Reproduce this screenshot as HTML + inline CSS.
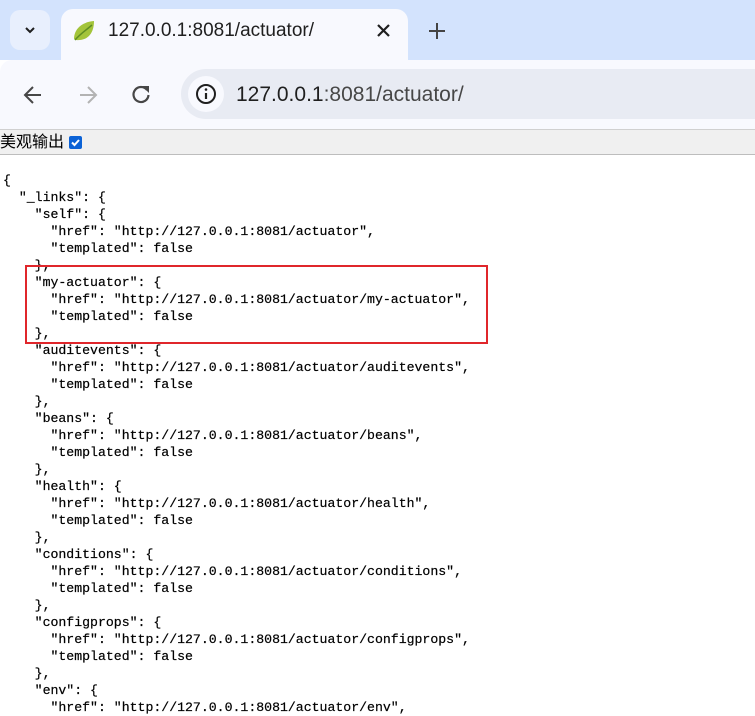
<!DOCTYPE html>
<html><head><meta charset="utf-8"><style>
body{margin:0;width:755px;height:715px;overflow:hidden;background:#fff;font-family:"Liberation Sans","Noto Sans CJK SC",sans-serif;position:relative}
.strip{position:absolute;left:0;top:0;width:755px;height:60px;background:#d3e3fd}
.tabbtn{position:absolute;left:10px;top:10px;width:40px;height:40px;border-radius:10px;background:#e8effd}
.tab{position:absolute;left:61px;top:9px;width:347px;height:52px;background:#f8f9fe;border-radius:12px 12px 0 0}
.tabtxt{position:absolute;left:108px;top:20px;font-size:19px;color:#1f1f1f}
.tool{position:absolute;left:0;top:60px;width:755px;height:69px;background:#f8f9fe;border-radius:12px 0 0 0;border-bottom:1px solid #d0d0d0}
.omni{position:absolute;left:181px;top:69px;width:600px;height:50px;border-radius:25px;background:#e8ebf3}
.info{position:absolute;left:188px;top:76px;width:36px;height:36px;border-radius:18px;background:#f8f9fe}
.url{position:absolute;left:236px;top:83px;font-size:21px;color:#1f1f1f}
.bar{position:absolute;left:0;top:130px;width:755px;height:24px;background:#f0f0f0;border-bottom:1px solid #bdbdbd;font-size:16px;line-height:26px}
.cb{position:absolute;left:69px;top:136px;width:13px;height:13px;background:#0b62d6;border-radius:2px}
pre{position:absolute;left:3px;top:172px;margin:0;font-family:"Liberation Mono",monospace;font-size:13.2px;line-height:17px;color:#000;-webkit-text-stroke:0.2px #000}
.box{position:absolute;left:25px;top:265px;width:459px;height:75px;border:2px solid #e0262b}
</style></head><body>
<div class="strip"></div>
<div class="tabbtn"></div>
<svg style="position:absolute;left:22px;top:22px" width="16" height="16"><path d="M4 6l4 4 4-4" fill="none" stroke="#1f1f1f" stroke-width="2"/></svg>
<div class="tab"></div>
<svg style="position:absolute;left:72px;top:19px" width="24" height="24"><path d="M2 20C2 10 10 3 22 2C22 14 16 22 4 21Z" fill="#a3c43a"/><path d="M3 21C8 15 13 12 20 6" stroke="#5e8d21" stroke-width="1.5" fill="none"/></svg>
<div class="tabtxt">127.0.0.1:8081/actuator/</div>
<svg style="position:absolute;left:376px;top:23px" width="16" height="16"><path d="M2 2l11 11M13 2L2 13" stroke="#1f1f1f" stroke-width="2.2"/></svg>
<svg style="position:absolute;left:428px;top:22px" width="18" height="18"><path d="M9 1v16M1 9h16" stroke="#444" stroke-width="2"/></svg>
<div class="tool"></div>
<svg style="position:absolute;left:22px;top:84px" width="22" height="22"><path d="M19 11H4M11 3L3 11l8 8" fill="none" stroke="#474747" stroke-width="2"/></svg>
<svg style="position:absolute;left:77px;top:84px" width="22" height="22"><path d="M3 11h15M11 3l8 8-8 8" fill="none" stroke="#b3b3b3" stroke-width="2"/></svg>
<svg style="position:absolute;left:130px;top:83px" width="22" height="22"><path d="M17 7A7.5 7.5 0 1 0 18.5 12" fill="none" stroke="#474747" stroke-width="2.2"/><path d="M12 3h7v7z" fill="#474747"/></svg>
<div class="omni"></div>
<div class="info"></div>
<svg style="position:absolute;left:195px;top:83px" width="22" height="22"><circle cx="11" cy="11" r="9" fill="none" stroke="#1f1f1f" stroke-width="2"/><path d="M11 10v6" stroke="#1f1f1f" stroke-width="2.2"/><circle cx="11" cy="6.5" r="1.3" fill="#1f1f1f"/></svg>
<div class="url">127.0.0.1<span style="color:#474747">:8081/actuator/</span></div>
<div class="bar">美观输出</div>
<div class="cb"><svg width="13" height="13"><path d="M3 6.5l2.5 2.5L10 4" fill="none" stroke="#fff" stroke-width="2"/></svg></div>
<pre>{
  "_links": {
    "self": {
      "href": "http://127.0.0.1:8081/actuator",
      "templated": false
    },
    "my-actuator": {
      "href": "http://127.0.0.1:8081/actuator/my-actuator",
      "templated": false
    },
    "auditevents": {
      "href": "http://127.0.0.1:8081/actuator/auditevents",
      "templated": false
    },
    "beans": {
      "href": "http://127.0.0.1:8081/actuator/beans",
      "templated": false
    },
    "health": {
      "href": "http://127.0.0.1:8081/actuator/health",
      "templated": false
    },
    "conditions": {
      "href": "http://127.0.0.1:8081/actuator/conditions",
      "templated": false
    },
    "configprops": {
      "href": "http://127.0.0.1:8081/actuator/configprops",
      "templated": false
    },
    "env": {
      "href": "http://127.0.0.1:8081/actuator/env",
</pre>
<div class="box"></div>
</body></html>
